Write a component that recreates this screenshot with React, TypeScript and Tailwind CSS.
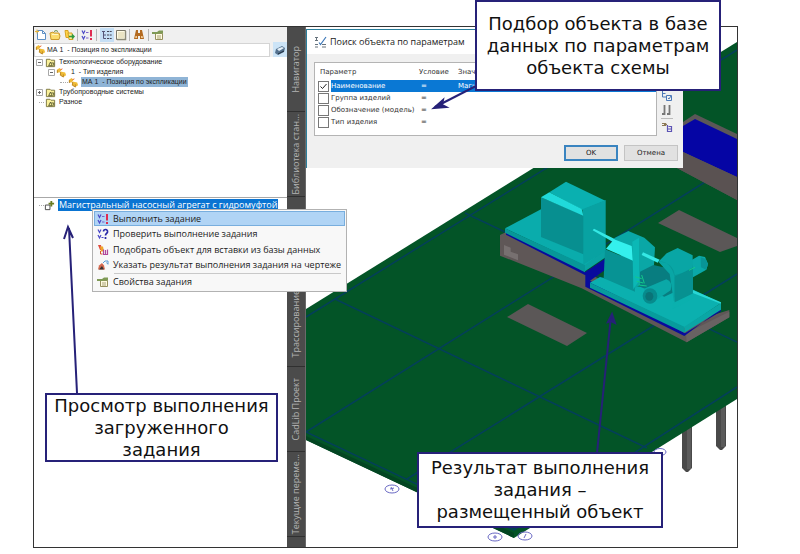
import type { ReactNode } from "react";

const INK = "#262178";

function Svg({ children, className = "h-3 w-3" }: { children: ReactNode; className?: string }) {
  return (
    <svg viewBox="0 0 12 12" aria-hidden="true" className={"shrink-0 " + className} fill="none">
      {children}
    </svg>
  );
}

const NewIcon = () => (
  <Svg>
    <path d="M2.5 1.5h5l3 3v6h-8z" fill="#fff" stroke="#5d8fc4" />
    <path d="M7.5 1.5v3h3" stroke="#5d8fc4" />
    <path d="M0 2.5h4M2 .5v4" stroke="#e7b43c" />
  </Svg>
);
const OpenIcon = () => (
  <Svg>
    <path d="M1 4l3-1 1 1h5l1 3-1 3.500H2z" fill="#fbdc6c" stroke="#c9992e" />
    <path d="M3 5.500h6" stroke="#fff5c4" />
    <path d="M5 2.500q2-2 4 0" stroke="#6b8f45" />
  </Svg>
);
const ImportIcon = () => (
  <Svg>
    <path d="M2 1.500h3l1 7H3z" fill="#ffd54a" stroke="#d8a222" />
    <path d="M5 4h4l1 6.500H6z" fill="#ffe98e" stroke="#d0a020" />
    <path d="M6 7.500h4.500M9 5.500l2 2-2 2" stroke="#2f9a3d" strokeWidth="1.500" />
  </Svg>
);
const RunIcon = () => (
  <Svg>
    <path d="M1 1.500l1.500 3 1.500-3M1 7l1.500 3L4 7" stroke="#4b49c7" strokeWidth="1.200" />
    <path d="M5 3.500h2.500M5 9h2.500" stroke="#7c62c9" strokeWidth="1.200" />
    <path d="M10 1v6.500M10 9v2" stroke="#e02b50" strokeWidth="2" />
  </Svg>
);
const CheckIcon = () => (
  <Svg>
    <path d="M1 1.500l1.500 3 1.500-3M1 7l1.500 3L4 7M4.500 9.500h2" stroke="#4b49c7" strokeWidth="1.200" />
    <path d="M6.500 3.500C6.500.5 11 1 10.500 4 10.200 5.500 8.500 5.500 8.500 7.500M8.500 9v2" stroke="#2a2aa8" strokeWidth="1.700" />
  </Svg>
);
const TreeIcon = () => (
  <Svg>
    <path d="M1 2.500h3M2.500 2.500v7H5M2.500 6H5" stroke="#557" />
    <path d="M6 2.500h5M6 6h5M6 9.500h5" stroke="#445" strokeDasharray="2 .7" />
  </Svg>
);
const ListIcon = () => (
  <Svg>
    <path d="M1.500 1.500h9v9h-9z" fill="#fffbe4" stroke="#7b7869" />
    <path d="M3 4h6M3 6h6M3 8h6" stroke="#d6cda4" />
    <path d="M10.500 2v8.500H2" stroke="#8d8a77" strokeWidth="1.500" />
  </Svg>
);
const FindIcon = () => (
  <Svg>
    <path d="M3 1h2v3h2V1h2l2 9H7V7H5v3H1z" fill="#b36a20" />
    <path d="M2.500 7h1.500v2H2.200zM8 7h1.500l.500 2H8z" fill="#f0c993" />
  </Svg>
);
const PropsIcon = () => (
  <Svg>
    <path d="M3.500 4.500h7v6h-7z" fill="#fffbe0" stroke="#96905e" />
    <path d="M5 7h4M5 9h4" stroke="#a7a27a" />
    <path d="M0 3h5l2-1.500h4v3H7L5 5H0z" fill="#7f9a56" />
  </Svg>
);
const PickIcon = () => (
  <Svg>
    <path d="M1 1h3l1 5H3z" fill="#e04a3c" />
    <path d="M3 2.500h3l1 5H4z" fill="#f0a62a" />
    <path d="M3.500 7v3h2" stroke="#d8582e" />
    <path d="M6.500 5.500v5h4v-5M8.500 6v4" stroke="#b0489c" strokeWidth="1.200" />
  </Svg>
);
const ResultIcon = () => (
  <Svg>
    <path d="M1 10.500l1-4 3-2.500 2 2.500 1 4z" fill="#d4694f" />
    <path d="M2 10.500l3-3.500 2 3.500z" fill="#333" />
    <path d="M6 4l2-2h3v3M9.500 3.500l1.500 2" stroke="#5a9bd4" />
  </Svg>
);
const CubesIcon = () => (
  <Svg className="h-[11px] w-[11px]">
    <path d="M1 3l3-2 2 2-2 3H1z" fill="#efbc3b" />
    <path d="M5 5l5 1 1 3-3 2-4-2z" fill="#f0bd35" />
    <path d="M1.500 3.500v3M5 5.500v3.500l3 2M8 8v3" stroke="#b8842a" />
    <path d="M5 3l2-1" stroke="#e45b28" />
  </Svg>
);
const FolderIcon = () => (
  <Svg className="h-[11px] w-[11px]">
    <path d="M1.500 2.500h4l1 1h4v7h-9z" fill="#fbf19a" stroke="#77733c" />
    <path d="M4 9.500l2-4 2 4zM7 6.500h2.500v3" stroke="#55562e" />
  </Svg>
);
const NodeIcon = () => (
  <Svg className="h-[11px] w-[11px]">
    <path d="M1.500 5.500h5v5h-5z" fill="#fff" stroke="#444" />
    <path d="M5 4h6M8 1v6" stroke="#6a7c22" strokeWidth="2" />
  </Svg>
);
const CaseIcon = () => (
  <Svg>
    <path d="M2 5l6-3 3 2-1 4-6 3-3-2z" fill="#55728f" />
    <path d="M3 5l5-2 2 1-5 3z" fill="#e8f3fb" />
    <path d="M4 10l6-3" stroke="#1e2e40" />
  </Svg>
);
const SearchParamsIcon = () => (
  <svg viewBox="0 0 14 12" aria-hidden="true" className="h-3 w-3.5" fill="none">
    <path d="M1 1.500h3M1 4.500h3M2.500 1v4M1 8.500h3M1 11h3M8 8.500h4M8 11h4" stroke="#66727c" />
    <path d="M5 6.500l1.500 2L12 1" stroke="#3c77b8" strokeWidth="1.200" />
  </svg>
);

function Toolbar() {
  const btn = "flex h-3.5 w-3.5 items-center justify-center";
  const sep = <span className="mx-px h-3 w-px bg-[#b5b5b5]" />;
  return (
    <div className="flex h-[15px] items-center bg-[#f0f0f0]" role="toolbar">
      <button className={btn} aria-label="Создать"><NewIcon /></button>
      <button className={btn} aria-label="Открыть"><OpenIcon /></button>
      <button className={btn} aria-label="Импорт"><ImportIcon /></button>
      {sep}
      <button className="flex h-3.5 w-4 items-center justify-center" aria-label="Выполнить"><RunIcon /></button>
      {sep}
      <button className="ml-0.5 flex h-3.5 w-3.5 items-center justify-center bg-[#c5dff5]" aria-label="Дерево"><TreeIcon /></button>
      <button className={btn} aria-label="Список"><ListIcon /></button>
      {sep}
      <button className="flex h-3.5 w-4 items-center justify-center" aria-label="Поиск"><FindIcon /></button>
      {sep}
      <button className="flex h-3.5 w-4 items-center justify-center" aria-label="Свойства"><PropsIcon /></button>
    </div>
  );
}

function Expander({ open }: { open: boolean }) {
  return (
    <svg viewBox="0 0 9 9" aria-hidden="true" className="h-[9px] w-[9px] shrink-0">
      <path d="M1.500 1.500h6v6h-6z" fill="#fff" stroke="#a8a8a8" />
      <path d={open ? "M3 4.500h3" : "M3 4.500h3M4.500 3v3"} stroke="#666" />
    </svg>
  );
}

const Dash = ({ className }: { className: string }) => (
  <span className={"shrink-0 border-t border-dotted border-[#aaa] " + className} />
);

function Tree() {
  const row = "flex h-2.5 items-center whitespace-pre";
  return (
    <ul className="h-[140px] pl-px font-['Liberation_Sans',Arial,sans-serif] text-[7px] leading-[10px] text-[#222]">
      <li>
        <div className={row}><Expander open /><span className="mx-px"><FolderIcon /></span><span className="pl-0.5">Технологическое оборудование</span></div>
        <ul>
          <li>
            <div className={row + " pl-3"}><Expander open /><CubesIcon /><span className="pl-1">1  - Тип изделия</span></div>
            <ul>
              <li className={row + " pl-[25px]"}>
                <Dash className="w-2" />
                <CubesIcon />
                <button className="ml-0.5 h-2.5 bg-[#8fb4d6] px-px whitespace-pre">МА 1  - Позиция по экспликации</button>
              </li>
            </ul>
          </li>
        </ul>
      </li>
      <li className={row}><Expander open={false} /><span className="mx-px"><FolderIcon /></span><span className="pl-0.5">Трубопроводные системы</span></li>
      <li className={row}><Dash className="ml-1 w-[5px]" /><span className="mx-px"><FolderIcon /></span><span className="pl-0.5">Разное</span></li>
    </ul>
  );
}

function LeftPanel() {
  return (
    <section className="flex w-[253px] shrink-0 flex-col bg-white">
      <Toolbar />
      <div className="flex h-[15px] items-center justify-between bg-[#f0f0f0]">
        <label className="flex h-3.5 w-[236px] items-center border border-[#d4d4d4] bg-white">
          <CubesIcon />
          <input
            aria-label="Позиция"
            defaultValue="МА 1  - Позиция по экспликации"
            className="w-full pl-px font-['Liberation_Sans',Arial,sans-serif] text-[7px] leading-[10px] text-[#222] outline-none"
          />
        </label>
        <button aria-label="Найти" className="flex h-[15px] w-3.5 items-center justify-center bg-[#cce4f7]"><CaseIcon /></button>
      </div>
      <Tree />
      <div className="flex flex-1 items-start border-t border-[#a8a8a8] pl-[5px]">
        <div className="flex h-[14px] items-center">
          <Dash className="w-[5px]" />
          <NodeIcon />
          <button className="ml-[3px] h-3 bg-[#0a74d2] px-px font-['Open_Sans','Noto_Sans',sans-serif] text-[9px] leading-3 whitespace-nowrap text-white">
            Магистральный насосный агрегат с гидромуфтой
          </button>
        </div>
      </div>
    </section>
  );
}

const TABS = ["Навигатор", "Библиотека стан...", "", "Трассирование", "CadLib Проект", "Текущие переме..."];

function SideTabs() {
  return (
    <nav className="flex w-[19px] shrink-0 flex-col border-r border-[#6a6a6a] bg-[#4b4b4b]">
      {TABS.map((t, i) => (
        <button
          key={i}
          aria-label={t || "Задания"}
          className="flex h-[85px] shrink-0 items-center justify-center border-b border-[#303030] font-['Open_Sans','Noto_Sans',sans-serif] text-[9px] leading-3 whitespace-nowrap text-[#b4b4b4]"
        >
          <span className="rotate-180 [writing-mode:vertical-rl]">{t}</span>
        </button>
      ))}
    </nav>
  );
}

function Scene() {
  return (
    <svg viewBox="306 27 431 520" preserveAspectRatio="xMinYMin slice" className="absolute inset-0 h-full w-full" aria-hidden="true">
      <path d="M682 425h10v43l-4 4h-2l-4-4zM716 403h10v43l-4 4h-2l-4-4z" fill="#494949" />
      <path d="M687 425h4v44h-4zM721 403h4v44h-4z" fill="#5b5b5b" />
      <path d="M306 309L737 42v357L514 538 306 440z" fill="#035427" />
      <path d="M306 436l208 97v5L306 440z" fill="#034522" />
      <g stroke="#043f5a" strokeWidth="1.500" fill="none">
        <path d="M306 317L737 50M465 213l272 129M335 299l312 149M306 432L737 162M407 479L737 274M306 432l208 98L737 387" />
      </g>
      <g fill="#5b5757">
        <path d="M507 317l21-13 59 29-20 13zM658 223l21-13 58 28v8l-17 6z" />
        <path d="M683 122l12-8 42 20v66l-60-32z" />
      </g>
      <path d="M683 126l12-7 42 20v38l-54-25z" fill="#0505a4" />
      <path d="M683 152l54 25v23l-60-32z" fill="#5a5252" />
      <g transform="translate(490 160) scale(.33333)">
        <path d="M30 225l20-10 538 275 130-40v22L590 547 275 385 30 287z" fill="#5f5757" />
        <path d="M588 520l130-65v17L590 547z" fill="#696262" />
        <path d="M42 255l20 8v12l22 8v18l-42-17z" fill="#777070" />
        <path d="M48 212l238 124 62-42v34l-48 34 285 158 108-66v-8L583 528 286 380V346L48 224z" fill="#080b9d" />
        <path d="M45 205l108-57 195 120-62 50z" fill="#0aacac" />
        <path d="M45 205l240 110v22L45 218z" fill="#079798" />
        <path d="M285 315l63-48v24l-63 43z" fill="#0aa3a3" />
        <path d="M178 97l50-32 118 57-68 28z" fill="#0ab0b0" />
        <path d="M277 148l70-28v152l-67 42z" fill="#08a2a2" />
        <path d="M153 112l127 53v118l-127-52z" fill="#078f90" />
        <path d="M153 112l25-15 97 50 5 20z" fill="#20dada" />
        <path d="M308 211l4-5 68 34-6 9z" fill="#35e8e5" />
        <path d="M300 368l30-17 110 28 170 10 83 40-110 74z" fill="#0bb0af" />
        <path d="M300 368l283 132v18L300 383z" fill="#079c9c" />
        <path d="M583 500l110-71v20l-110 69z" fill="#0aa6a5" />
        <path d="M608 390l85 37v4l-85-32z" fill="#29d7d5" />
        <path d="M372 235l43-22 48 20 32 29-5 90-60 35z" fill="#0aa7a6" />
        <path d="M345 268l85 34 5 93-94-40z" fill="#079394" />
        <path d="M348 266l24-28 53 20 4 44z" fill="#34f0ed" />
        <path d="M427 245l20-12v130l-17 25z" fill="#0bb8b6" />
        <path d="M455 285l4-8 50 22-6 9z" fill="#35e8e5" />
        <path d="M605 300l22-13 18 4 9 20-5 18-40 23z" fill="#0aa9a8" />
        <path d="M632 292l15 5 7 17-6 15-15-7z" fill="#089596" />
        <path d="M450 335l40-20 45 10 20 70-32 15-73-30z" fill="#087d80" />
        <path d="M505 305l25-25 33-16 45 22v120l-37 24-20-8-12-80z" fill="#09a6a5" />
        <path d="M505 305q35-5 49 45v60l17 20 37-24V330l-54 16q-5-40-49-41" fill="#089898" />
        <path d="M554 350l54-27v83l-54 22z" fill="#079191" />
        <path d="M462 386l67-28q20 6 13 33l-60 40z" fill="#0aa8a7" />
        <ellipse cx="480" cy="408" rx="22" ry="23" fill="#078b8d" />
        <ellipse cx="478" cy="409" rx="12" ry="13" fill="#0a7377" />
        <path d="M548 430l62-30v15l-62 32z" fill="#0ab0ae" />
        <path d="M435 350l20 6M440 364l20 5M446 375l24 3M455 345l8 25M597 331l18-9" stroke="#13c88b" strokeWidth="3" />
      </g>
      <g fill="none" stroke="#6a69c4">
        <ellipse cx="392" cy="489" rx="7" ry="4" />
        <ellipse cx="495" cy="537" rx="7" ry="4" />
        <ellipse cx="525" cy="536" rx="7" ry="4" />
        <ellipse cx="660" cy="452" rx="6" ry="3.500" />
        <path d="M390 489l4-1M391 487l2 4M493 537l4 0M495 535v4M524 538l2-4" />
      </g>
    </svg>
  );
}

const PARAMS = [
  { name: "Наименование", value: "Магистральный", on: true },
  { name: "Группа изделий", value: "", on: false },
  { name: "Обозначение (модель)", value: "", on: false },
  { name: "Тип изделия", value: "", on: false },
];

function SearchDialog() {
  return (
    <div role="dialog" aria-label="Поиск объекта по параметрам" className="absolute top-0.5 left-0 w-[377px] border-t border-l border-[#2b7f9c] bg-[#f0f0f0]">
      <header className="flex h-6 items-center gap-0.5 bg-white pl-[7px] font-['Open_Sans','Noto_Sans',sans-serif] text-[9px] leading-3 text-[#222]">
        <SearchParamsIcon />
        <h1>Поиск объекта по параметрам</h1>
      </header>
      <div className="flex gap-1 pt-2 pl-[7px]">
        <div className="h-[74px] w-[343px] border border-[#b4b4b4] bg-white pt-px pl-[3px]">
          <table className="w-full table-fixed border-collapse text-left font-['DejaVu_Sans',Verdana,sans-serif] text-[7px] leading-3 text-[#333]">
            <thead>
              <tr className="h-4">
                <th className="w-[101px] pl-0.5 font-normal">Параметр</th>
                <th className="w-[39px] font-normal">Условие</th>
                <th className="font-normal">Значение</th>
              </tr>
            </thead>
            <tbody>
              {PARAMS.map((p) => (
                <tr key={p.name} className="h-3">
                  <td className="p-0">
                    <label className="flex h-3 items-center gap-0.5 whitespace-nowrap">
                      <span className="relative flex">
                        <input type="checkbox" defaultChecked={p.on} className="peer h-[11px] w-[11px] appearance-none border border-[#777] bg-white" />
                        <svg viewBox="0 0 11 11" className="pointer-events-none absolute inset-0 hidden h-[11px] w-[11px] peer-checked:block" fill="none" stroke="#222">
                          <path d="M2.500 5.500l2 2 4-4.500" />
                        </svg>
                      </span>
                      <span className={p.on ? "flex-1 bg-[#0a78d4] text-white" : "flex-1"}>{p.name}</span>
                    </label>
                  </td>
                  <td className={p.on ? "bg-[#0a78d4] p-0 pl-0.5 text-white" : "p-0 pl-0.5"}>=</td>
                  <td className={p.on ? "bg-[#0a78d4] p-0 text-white" : "p-0"}>{p.value}</td>
                </tr>
              ))}
            </tbody>
          </table>
        </div>
        <div className="flex flex-col items-center gap-0.5 pt-7">
          <button aria-label="Копировать условия">
            <Svg><path d="M1.500 1v6h4M1.500 3.500h3M5.500 5.500h5v5h-5zM7 8l1 1 2-3" stroke="#4c79b8" /></Svg>
          </button>
          <button aria-label="Столбцы">
            <Svg><path d="M3.500 1v9H1M8.500 1v9H6" stroke="#777" strokeWidth="1.800" /></Svg>
          </button>
          <span className="h-px w-3 bg-[#bbb]" />
          <button aria-label="Связать">
            <Svg><path d="M1 2.500h4v2H1M3 3.500h3" stroke="#8c7955" /><path d="M6.500 4v6.500h4v-5h-3M6.500 8h4" stroke="#5d54b5" strokeWidth="1.200" /></Svg>
          </button>
        </div>
      </div>
      <footer className="flex justify-end gap-1.5 pt-[9px] pr-[5px] pb-[7px] font-['DejaVu_Sans',Verdana,sans-serif] text-[7px] leading-3 text-[#222]">
        <button className="h-4 w-[54px] border-2 border-[#3a84c0] bg-[#e1e1e1]">OK</button>
        <button className="h-4 w-[54px] border border-[#c4c4c4] bg-[#e1e1e1]">Отмена</button>
      </footer>
    </div>
  );
}

function ContextMenu() {
  const item = "flex w-full items-center gap-1 border px-0.5 text-left whitespace-nowrap";
  return (
    <div role="menu" className="absolute top-[209px] left-[92px] w-[255px] border border-[#b2b2b2] bg-[#f8f8f8] p-px font-['Open_Sans','Noto_Sans',sans-serif] text-[9px] leading-3 text-[#222]">
      <button role="menuitem" className={item + " h-[15px] border-[#78aede] bg-[#b0d4f5]"}><RunIcon />Выполнить задание</button>
      <button role="menuitem" className={item + " h-4 border-transparent"}><CheckIcon />Проверить выполнение задания</button>
      <button role="menuitem" className={item + " h-[15px] border-transparent"}><PickIcon />Подобрать объект для вставки из базы данных</button>
      <button role="menuitem" className={item + " h-4 border-transparent"}><ResultIcon />Указать результат выполнения задания на чертеже</button>
      <hr className="mr-1 ml-5 border-[#c9c9c9]" />
      <button role="menuitem" className={item + " h-4 border-transparent"}><PropsIcon />Свойства задания</button>
    </div>
  );
}

const CALLOUT = "absolute flex flex-col items-center border-2 border-[#262178] bg-white font-['DejaVu_Sans',Verdana,sans-serif] text-[18px] leading-[22px] whitespace-nowrap text-[#111]";

export default function App() {
  return (
    <main className="relative flex h-screen flex-col bg-white pt-[26px] pr-[62px] pb-1.5 pl-[33px]">
      <div className="flex min-h-0 flex-1 overflow-hidden border border-[#333]">
        <LeftPanel />
        <SideTabs />
        <section className="relative min-w-0 flex-1 overflow-hidden bg-white">
          <Scene />
          <SearchDialog />
        </section>
      </div>
      <ContextMenu />
      <div className={CALLOUT + " top-0 left-[475px] h-[91px] w-[246px] pt-[11px]"}>
        <p>Подбор объекта в базе</p>
        <p>данных по параметрам</p>
        <p>объекта схемы</p>
      </div>
      <div className={CALLOUT + " top-[393px] left-[45px] h-[69px] w-[233px]"}>
        <p>Просмотр выполнения</p>
        <p>загруженного</p>
        <p>задания</p>
      </div>
      <div className={CALLOUT + " top-[452px] left-[417px] h-[76px] w-[246px] pt-[3px]"}>
        <p>Результат выполнения</p>
        <p>задания –</p>
        <p>размещенный объект</p>
      </div>
      <svg viewBox="0 0 800 554" className="pointer-events-none absolute top-0 left-0 h-[554px] w-[800px]" fill="none" stroke={INK} strokeWidth="2" aria-hidden="true">
        <path d="M77 393L69 228M64 239l4-12 5 11" />
        <path d="M476 86l-41 21" />
        <path d="M443 100l-9 8 12-1-4-2z" fill={INK} />
        <path d="M597 453l14-137" />
        <path d="M608 322l4-8 3 9-4-2z" fill={INK} />
      </svg>
    </main>
  );
}
